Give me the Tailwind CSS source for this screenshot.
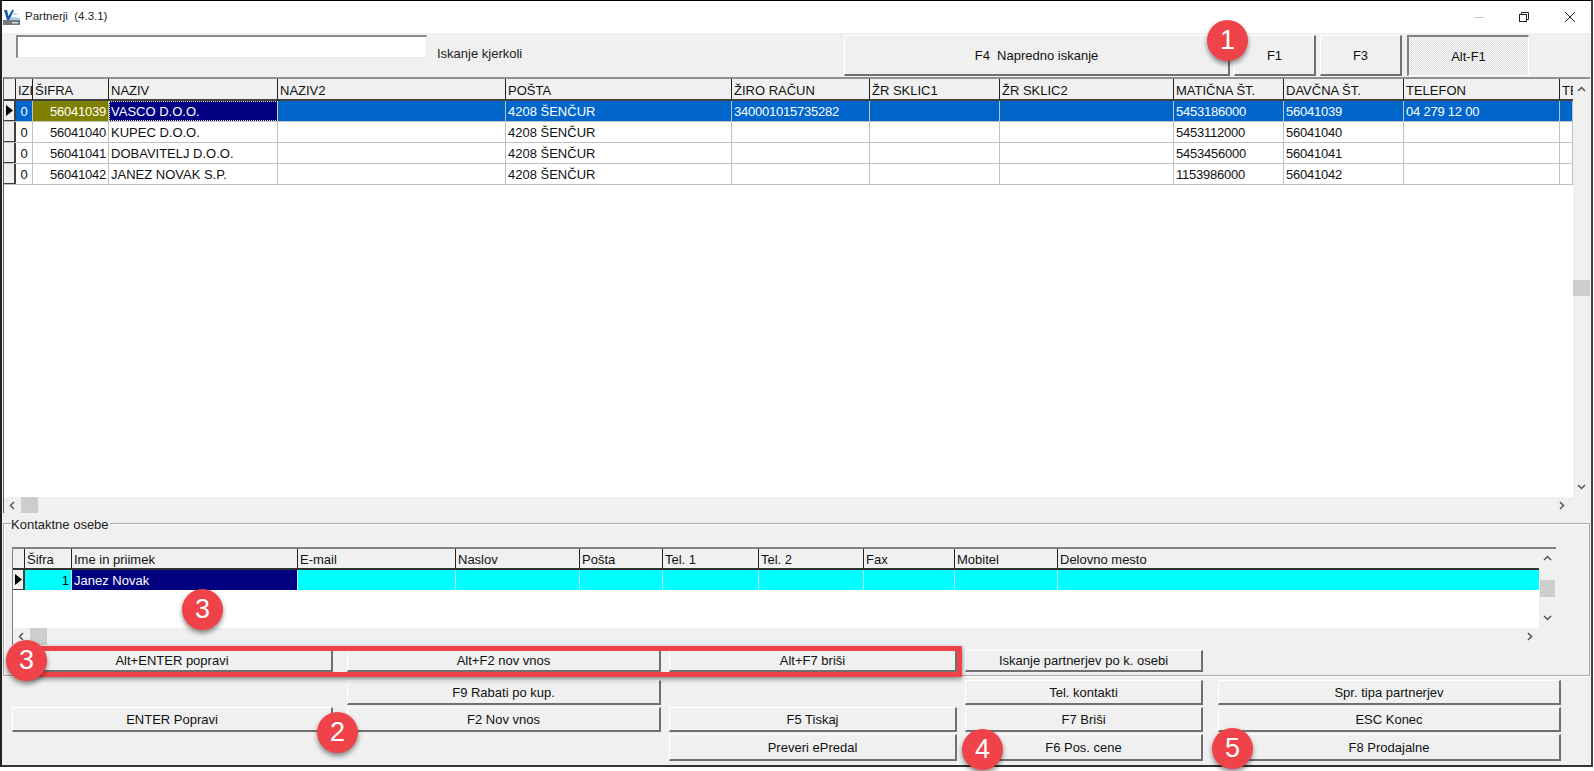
<!DOCTYPE html>
<html lang="sl">
<head>
<meta charset="utf-8">
<title>Partnerji</title>
<script src="https://cdn.jsdelivr.net/npm/@tailwindcss/browser@4"></script>
</head>
<body class="bg-white">
<div class="relative w-[1594px] h-[771px] overflow-hidden bg-white font-['Liberation_Sans',Arial,sans-serif] text-[13px] leading-none text-[#111]">

  <div class="w-[1593px] h-[767px] border-t border-l-2 border-r-2 border-b-2 border-t-black border-l-[#222] border-r-[#444] border-b-[#333] bg-[#f0f0f0] flex flex-col">

    <!-- title bar -->
    <div class="h-[32px] shrink-0 bg-white flex items-center">
      <svg class="ml-[1px] w-[17px] h-[16px] mt-[-1px]" viewBox="0 0 17 16">
        <rect x="0" y="11" width="17" height="5" fill="#75797d"/>
        <rect x="9" y="13" width="6" height="1.500" fill="#d8d8d8"/>
        <path d="M1 1h3l1.500 6L9 1h2L6.500 11H4Z" fill="#1358ad"/>
        <path d="M8 8l9 1v2H6Z" fill="#a9cbea"/>
        <path d="M11 3l5 3-6 0Z" fill="#c9d9ea"/>
      </svg>
      <span class="ml-[5px] text-[11.5px] text-[#222]">Partnerji&nbsp; (4.3.1)</span>
      <div class="ml-auto flex items-center mr-[15px] text-[#222]">
        <svg class="w-[12px] h-[12px]" viewBox="0 0 12 12"><path d="M1 6.500h10" stroke="#c4c4c4"/></svg>
        <svg class="ml-[33px] w-[12px] h-[12px]" viewBox="0 0 12 12" fill="none" stroke="#222"><rect x="1.500" y="3.500" width="7" height="7"/><path d="M3.500 3.500v-2h7v7h-2"/></svg>
        <svg class="ml-[34px] w-[12px] h-[12px]" viewBox="0 0 12 12" fill="none" stroke="#222"><path d="M1 1l10 10M11 1L1 11"/></svg>
      </div>
    </div>

    <!-- toolbar -->
    <div class="h-[44px] shrink-0 flex items-start pt-[2px]">
      <div class="ml-[14px] w-[411px] h-[23px] bg-white border-t-2 border-l-2 border-[#8a8a8a] border-r border-b border-r-[#e8e8e8] border-b-[#e8e8e8]"></div>
      <span class="ml-[10px] mt-[12px] w-[407px] text-[#222]">Iskanje kjerkoli</span>
      <div class="w-[386px] h-[41px] flex items-center justify-center border-t border-l border-t-white border-l-white border-r-2 border-b-2 border-r-[#707070] border-b-[#707070]">F4&nbsp; Napredno iskanje</div>
      <div class="ml-[4px] w-[82px] h-[41px] flex items-center justify-center border-t border-l border-t-white border-l-white border-r-2 border-b-2 border-r-[#707070] border-b-[#707070]">F1</div>
      <div class="ml-[4px] w-[82px] h-[41px] flex items-center justify-center border-t border-l border-t-white border-l-white border-r-2 border-b-2 border-r-[#707070] border-b-[#707070]">F3</div>
      <div class="ml-[5px] w-[122px] h-[41px] flex items-center justify-center border-t-2 border-l-2 border-t-[#808080] border-l-[#808080] border-r border-b border-r-white border-b-white bg-[repeating-conic-gradient(#e2e2e2_0_25%,#f6f6f6_0_50%)] bg-size-[2px_2px]">Alt-F1</div>
    </div>

    <!-- main grid -->
    <div class="ml-[1px] w-[1587px] h-[436px] shrink-0 border-t-2 border-l border-t-[#909090] border-l-[#606060] flex flex-col">
      <div class="flex-1 flex min-h-0">
        <div class="w-[1569px] bg-white">
          <div class="h-[22px] grid grid-cols-[12px_17px_76px_169px_228px_226px_138px_130px_174px_110px_120px_156px_13px] border-b-2 border-b-[#404040] bg-[#f0f0f0] [&>div]:border-r [&>div]:border-r-[#222] [&>div]:pl-[2px] [&>div]:pt-[5px] [&>div]:overflow-hidden [&>div]:whitespace-nowrap">
            <div></div><div>IZE</div><div>ŠIFRA</div><div>NAZIV</div><div>NAZIV2</div><div>POŠTA</div><div>ŽIRO RAČUN</div><div>ŽR SKLIC1</div><div>ŽR SKLIC2</div><div>MATIČNA ŠT.</div><div>DAVČNA ŠT.</div><div>TELEFON</div><div class="border-r-0!">TE</div>
          </div>
          <div class="h-[21px] grid grid-cols-[12px_17px_76px_169px_228px_226px_138px_130px_174px_110px_120px_156px_13px] border-b border-b-[#c0c0c0] bg-[#0066cc] text-white [&>div]:border-r [&>div]:border-r-[#c0c0c0] [&>div]:px-[2px] [&>div]:pt-[4px] [&>div]:overflow-hidden [&>div]:whitespace-nowrap">
            <div class="bg-[#f0f0f0] flex items-center justify-center px-0! pt-0! border-r-2! border-r-[#404040]! border-b border-b-[#404040]"><svg class="w-[7px] h-[11px]" viewBox="0 0 7 11"><path d="M0 0l7 5.500L0 11Z" fill="#000"/></svg></div>
            <div class="text-center px-0!">0</div>
            <div class="bg-[#808000] text-right tracking-[-0.23px]">56041039</div>
            <div class="bg-[#000080] outline-1 outline-dotted outline-[#e8e8a0] -outline-offset-1">VASCO D.O.O.</div>
            <div></div><div>4208 ŠENČUR</div><div class="tracking-[-0.23px]">340001015735282</div><div></div><div></div><div class="tracking-[-0.23px]">5453186000</div><div class="tracking-[-0.23px]">56041039</div><div class="tracking-[-0.23px]">04 279 12 00</div><div></div>
          </div>
          <div class="h-[21px] grid grid-cols-[12px_17px_76px_169px_228px_226px_138px_130px_174px_110px_120px_156px_13px] border-b border-b-[#c0c0c0] [&>div]:border-r [&>div]:border-r-[#c0c0c0] [&>div]:px-[2px] [&>div]:pt-[4px] [&>div]:overflow-hidden [&>div]:whitespace-nowrap">
            <div class="bg-[#f0f0f0] border-r-2! border-r-[#404040]! border-b border-b-[#404040]"></div>
            <div class="text-center px-0!">0</div><div class="text-right tracking-[-0.23px]">56041040</div><div>KUPEC D.O.O.</div><div></div><div>4208 ŠENČUR</div><div></div><div></div><div></div><div class="tracking-[-0.23px]">5453112000</div><div class="tracking-[-0.23px]">56041040</div><div></div><div></div>
          </div>
          <div class="h-[21px] grid grid-cols-[12px_17px_76px_169px_228px_226px_138px_130px_174px_110px_120px_156px_13px] border-b border-b-[#c0c0c0] [&>div]:border-r [&>div]:border-r-[#c0c0c0] [&>div]:px-[2px] [&>div]:pt-[4px] [&>div]:overflow-hidden [&>div]:whitespace-nowrap">
            <div class="bg-[#f0f0f0] border-r-2! border-r-[#404040]! border-b border-b-[#404040]"></div>
            <div class="text-center px-0!">0</div><div class="text-right tracking-[-0.23px]">56041041</div><div>DOBAVITELJ D.O.O.</div><div></div><div>4208 ŠENČUR</div><div></div><div></div><div></div><div class="tracking-[-0.23px]">5453456000</div><div class="tracking-[-0.23px]">56041041</div><div></div><div></div>
          </div>
          <div class="h-[21px] grid grid-cols-[12px_17px_76px_169px_228px_226px_138px_130px_174px_110px_120px_156px_13px] border-b border-b-[#c0c0c0] [&>div]:border-r [&>div]:border-r-[#c0c0c0] [&>div]:px-[2px] [&>div]:pt-[4px] [&>div]:overflow-hidden [&>div]:whitespace-nowrap">
            <div class="bg-[#f0f0f0] border-r-2! border-r-[#404040]! border-b border-b-[#404040]"></div>
            <div class="text-center px-0!">0</div><div class="text-right tracking-[-0.23px]">56041042</div><div>JANEZ NOVAK S.P.</div><div></div><div>4208 ŠENČUR</div><div></div><div></div><div></div><div class="tracking-[-0.23px]">1153986000</div><div class="tracking-[-0.23px]">56041042</div><div></div><div></div>
          </div>
        </div>
        <!-- vertical scrollbar -->
        <div class="w-[17px] bg-[#f0f0f0] flex flex-col items-center justify-between pt-[7px] pb-[7px] relative">
          <svg class="w-[9px] h-[6px]" viewBox="0 0 9 6" fill="none" stroke="#555" stroke-width="1.500"><path d="M1 5l3.500-3.500L8 5"/></svg>
          <div class="absolute top-[201px] left-0 w-[17px] h-[16px] bg-[#cdcdcd]"></div>
          <svg class="w-[9px] h-[6px]" viewBox="0 0 9 6" fill="none" stroke="#555" stroke-width="1.500"><path d="M1 1l3.500 3.500L8 1"/></svg>
        </div>
      </div>
      <!-- horizontal scrollbar -->
      <div class="h-[16px] shrink-0 flex items-center relative">
        <svg class="ml-[5px] w-[6px] h-[9px]" viewBox="0 0 6 9" fill="none" stroke="#555" stroke-width="1.500"><path d="M5 1L1.500 4.500 5 8"/></svg>
        <div class="ml-[6px] w-[17px] h-[16px] bg-[#cdcdcd]"></div>
        <svg class="ml-auto mr-[25px] w-[6px] h-[9px]" viewBox="0 0 6 9" fill="none" stroke="#555" stroke-width="1.500"><path d="M1 1l3.500 3.500L1 8"/></svg>
      </div>
    </div>

    <!-- Kontaktne osebe group -->
    <div class="relative mt-[10px] ml-[1px] w-[1587px] h-[153px] shrink-0 border border-[#a8a8a8] shadow-[inset_1px_1px_0_#fff,0_1px_0_#fff]">
      <span class="absolute left-[7px] top-[-6px] bg-[#f0f0f0] pr-[1px] text-[#222]">Kontaktne osebe</span>
      <div class="ml-[8px] mt-[23px] w-[1544px] h-[98px] border-t-2 border-l border-t-[#808080] border-l-[#808080] flex flex-col">
        <div class="flex-1 flex min-h-0">
          <div class="w-[1526px] bg-white">
            <div class="h-[21px] grid grid-cols-[12px_47px_226px_158px_124px_83px_96px_105px_91px_103px_481px] border-b-2 border-b-[#303030] bg-[#f0f0f0] [&>div]:border-r [&>div]:border-r-[#222] [&>div]:pl-[2px] [&>div]:pt-[4px]">
              <div></div><div>Šifra</div><div>Ime in priimek</div><div>E-mail</div><div>Naslov</div><div>Pošta</div><div>Tel. 1</div><div>Tel. 2</div><div>Fax</div><div>Mobitel</div><div class="border-r-0!">Delovno mesto</div>
            </div>
            <div class="h-[20px] grid grid-cols-[12px_47px_226px_158px_124px_83px_96px_105px_91px_103px_481px] bg-[#00ffff] [&>div]:border-r [&>div]:border-r-[#c0e8e8] [&>div]:px-[2px] [&>div]:pt-[4px]">
              <div class="bg-[#f0f0f0] flex items-center justify-center px-0! pt-0! border-r-2! border-r-[#404040]! border-b border-b-[#404040]"><svg class="w-[7px] h-[11px]" viewBox="0 0 7 11"><path d="M0 0l7 5.500L0 11Z" fill="#000"/></svg></div>
              <div class="text-right">1</div>
              <div class="bg-[#000080] text-white">Janez Novak</div>
              <div></div><div></div><div></div><div></div><div></div><div></div><div></div><div class="border-r-0!"></div>
            </div>
          </div>
          <div class="w-[17px] flex flex-col items-center justify-between pt-[6px] pb-[7px] relative">
            <svg class="w-[9px] h-[6px]" viewBox="0 0 9 6" fill="none" stroke="#555" stroke-width="1.500"><path d="M1 5l3.500-3.500L8 5"/></svg>
            <div class="absolute top-[31px] left-[1px] w-[15px] h-[17px] bg-[#cdcdcd]"></div>
            <svg class="w-[9px] h-[6px]" viewBox="0 0 9 6" fill="none" stroke="#555" stroke-width="1.500"><path d="M1 1l3.500 3.500L8 1"/></svg>
          </div>
        </div>
        <div class="h-[17px] shrink-0 flex items-center">
          <svg class="ml-[5px] w-[6px] h-[9px]" viewBox="0 0 6 9" fill="none" stroke="#555" stroke-width="1.500"><path d="M5 1L1.500 4.500 5 8"/></svg>
          <div class="ml-[6px] w-[17px] h-[17px] bg-[#cdcdcd]"></div>
          <svg class="ml-auto mr-[23px] w-[6px] h-[9px]" viewBox="0 0 6 9" fill="none" stroke="#555" stroke-width="1.500"><path d="M1 1l3.500 3.500L1 8"/></svg>
        </div>
      </div>
      <div class="mt-[5px] ml-[8px] h-[22px] flex [&>div]:flex [&>div]:items-center [&>div]:justify-center [&>div]:border-t [&>div]:border-t-white [&>div]:border-l [&>div]:border-l-white [&>div]:border-r-2 [&>div]:border-b-2 [&>div]:border-r-[#707070] [&>div]:border-b-[#707070]">
        <div class="w-[321px]">Alt+ENTER popravi</div>
        <div class="ml-[14px] w-[314px]">Alt+F2 nov vnos</div>
        <div class="ml-[8px] w-[288px]">Alt+F7 briši</div>
        <div class="ml-[8px] w-[238px]">Iskanje partnerjev po k. osebi</div>
      </div>
    </div>

    <!-- bottom buttons -->
    <div class="mt-[4px] ml-[10px] grid grid-cols-[327px_314px_288px_238px_350px] grid-rows-[25px_25px_27px] gap-x-[8px] gap-y-[2px] [&>div]:flex [&>div]:items-center [&>div]:justify-center [&>div]:border-t [&>div]:border-t-white [&>div]:border-l [&>div]:border-l-white [&>div]:border-r-2 [&>div]:border-b-2 [&>div]:border-r-[#707070] [&>div]:border-b-[#707070]">
      <span></span>
      <div>F9 Rabati po kup.</div>
      <span></span>
      <div>Tel. kontakti</div>
      <div class="ml-[7px]">Spr. tipa partnerjev</div>

      <div class="mr-[6px]">ENTER Popravi</div>
      <div>F2 Nov vnos</div>
      <div>F5 Tiskaj</div>
      <div>F7 Briši</div>
      <div class="ml-[7px]">ESC Konec</div>

      <span></span>
      <span></span>
      <div>Preveri ePredal</div>
      <div>F6 Pos. cene</div>
      <div class="ml-[7px]">F8 Prodajalne</div>
    </div>
  </div>

  <!-- annotation overlays -->
  <div class="absolute left-[28px] top-[646px] w-[934px] h-[31px] border-[5px] border-[#f04249] shadow-[0_2px_5px_rgba(0,0,0,.45)]"></div>
  <div class="absolute left-[1207px] top-[20px] w-[41px] h-[41px] rounded-full bg-[#f04249] text-white text-[27px] flex items-center justify-center shadow-[0_3px_5px_rgba(0,0,0,.45)]">1</div>
  <div class="absolute left-[317px] top-[712px] w-[41px] h-[41px] rounded-full bg-[#f04249] text-white text-[27px] flex items-center justify-center shadow-[0_3px_5px_rgba(0,0,0,.45)]">2</div>
  <div class="absolute left-[182px] top-[589px] w-[41px] h-[41px] rounded-full bg-[#f04249] text-white text-[27px] flex items-center justify-center shadow-[0_3px_5px_rgba(0,0,0,.45)]">3</div>
  <div class="absolute left-[6px] top-[640px] w-[41px] h-[41px] rounded-full bg-[#f04249] text-white text-[27px] flex items-center justify-center shadow-[0_3px_5px_rgba(0,0,0,.45)]">3</div>
  <div class="absolute left-[962px] top-[729px] w-[41px] h-[41px] rounded-full bg-[#f04249] text-white text-[27px] flex items-center justify-center shadow-[0_3px_5px_rgba(0,0,0,.45)]">4</div>
  <div class="absolute left-[1212px] top-[728px] w-[41px] h-[41px] rounded-full bg-[#f04249] text-white text-[27px] flex items-center justify-center shadow-[0_3px_5px_rgba(0,0,0,.45)]">5</div>
</div>
</body>
</html>
